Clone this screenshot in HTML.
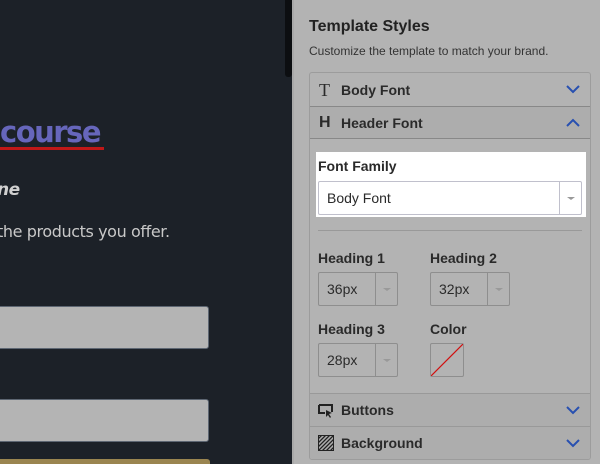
<!DOCTYPE html>
<html><head><style>
*{margin:0;padding:0;box-sizing:border-box}
body{width:600px;height:464px;overflow:hidden;position:relative;background:#b3b3b3;font-family:"Liberation Sans",sans-serif}
.abs{position:absolute}
.left{left:0;top:0;width:292px;height:464px;background:#1c2128;overflow:hidden}
.sb{left:285px;top:0;width:7px;height:77px;background:#0c0e11;border-radius:0 0 3px 3px}
.inp{left:-5px;width:214px;height:43px;background:#b4b4b4;border:1px solid #5d6672;border-radius:3px}
.row{position:absolute;left:0;right:0;height:33px;font-weight:bold;font-size:14px;color:#2a2a2a;display:flex;align-items:center;padding-left:31px}
.chev{position:absolute;right:10px;top:11px}
.lbl{font-size:14px;font-weight:bold;color:#2a2a2a}
.sel{position:absolute;height:34px;border:1px solid #8e8e8e;border-radius:2px;font-size:14px;color:#2a2a2a;line-height:32px;padding-left:8px}
.sel .sp{position:absolute;right:0;top:0;bottom:0;width:22px;border-left:1px solid #8e8e8e}
.sel .sp:after{content:"";position:absolute;left:7px;top:15px;border:4px solid transparent;border-top:3px solid #999;border-bottom:0}
</style></head><body>
<div class="abs left">
  <div class="abs" style="left:0;top:115px;font-size:29px;font-weight:bold;color:#6666bb;font-family:'DejaVu Sans',sans-serif;letter-spacing:-1.5px">course</div>
  <div class="abs" style="left:0;top:147px;width:104px;height:3px;background:#c01818"></div>
  <div class="abs" style="left:-3px;top:180px;font-size:17px;font-weight:bold;font-style:italic;color:#d0d0d0;font-family:'DejaVu Sans',sans-serif;letter-spacing:-0.5px">ne</div>
  <div class="abs" style="left:-3px;top:222px;font-size:16px;color:#c8c8c8;font-family:'DejaVu Sans',sans-serif;letter-spacing:-0.4px">the products you offer.</div>
  <div class="abs inp" style="top:306px"></div>
  <div class="abs inp" style="top:399px"></div>
  <div class="abs" style="left:-5px;top:459px;width:215px;height:10px;background:#9a8550;border-radius:3px"></div>
  <div class="abs sb"></div>
</div>
<div class="abs" style="left:292px;top:0;width:2px;height:464px;background:#a9a9a9"></div>
<div class="abs" style="left:309px;top:18px;font-size:16px;font-weight:bold;color:#222">Template Styles</div>
<div class="abs" style="left:309px;top:44px;font-size:12px;color:#333">Customize the template to match your brand.</div>
<div class="abs" style="left:309px;top:72px;width:282px;height:388px;border:1px solid #9c9c9c;border-radius:3px;overflow:hidden">
  <div class="row" style="top:0;">Body Font
    <span class="abs" style="left:9px;top:7px;font-family:'Liberation Serif',serif;font-weight:normal;font-size:18px">T</span>
    <svg class="chev" width="14" height="10"><path d="M1 2l6 6 6-6" stroke="#2850b0" stroke-width="2" fill="none"/></svg></div>
  <div class="row" style="top:33px;background:#adadad;border-top:1px solid #888;border-bottom:1px solid #888">Header Font
    <span class="abs" style="left:9px;top:7px;font-weight:bold;font-size:16px">H</span>
    <svg class="chev" width="14" height="10"><path d="M1 8l6-6 6 6" stroke="#2850b0" stroke-width="2" fill="none"/></svg></div>
  <div class="abs" style="left:6px;top:79px;width:270px;height:65px;background:#fff"></div>
  <div class="abs lbl" style="left:8px;top:85px">Font Family</div>
  <div class="sel" style="left:8px;top:108px;width:264px;border-color:#c0c0cc;background:#fff">Body Font<span class="sp" style="border-color:#c0c0cc"></span></div>
  <div class="abs" style="left:8px;top:157px;width:264px;height:1px;background:#999"></div>
  <div class="abs lbl" style="left:8px;top:177px">Heading 1</div>
  <div class="abs lbl" style="left:120px;top:177px">Heading 2</div>
  <div class="sel" style="left:8px;top:199px;width:80px">36px<span class="sp"></span></div>
  <div class="sel" style="left:120px;top:199px;width:80px">32px<span class="sp"></span></div>
  <div class="abs lbl" style="left:8px;top:248px">Heading 3</div>
  <div class="abs lbl" style="left:120px;top:248px">Color</div>
  <div class="sel" style="left:8px;top:270px;width:80px">28px<span class="sp"></span></div>
  <div class="abs" style="left:120px;top:270px;width:34px;height:34px;border:1px solid #8e8e8e;border-radius:2px"><svg width="32" height="32"><path d="M0 32L32 0" stroke="#d01010" stroke-width="1.2"/></svg></div>
  <div class="row" style="top:320px;background:#adadad;border-top:1px solid #999">Buttons
    <svg class="abs" style="left:8px;top:10px" width="16" height="14"><path d="M1 1h13v7M1 1v8h6" stroke="#222" stroke-width="2" fill="none"/><path d="M8 6l6 3-3 1 2 3-1 1-2-3-2 2z" fill="#222"/></svg>
    <svg class="chev" width="14" height="10"><path d="M1 2l6 6 6-6" stroke="#2850b0" stroke-width="2" fill="none"/></svg></div>
  <div class="row" style="top:353px;background:#adadad;border-top:1px solid #999">Background
    <svg class="abs" style="left:8px;top:8px" width="16" height="16"><rect x="0.5" y="0.5" width="15" height="15" fill="none" stroke="#222"/><path d="M0 4l4-4M0 8l8-8M0 12l12-12M0 16l16-16M4 16l12-12M8 16l8-8M12 16l4-4" stroke="#222" stroke-width="1.3"/></svg>
    <svg class="chev" width="14" height="10"><path d="M1 2l6 6 6-6" stroke="#2850b0" stroke-width="2" fill="none"/></svg></div>
</div>
</body></html>
